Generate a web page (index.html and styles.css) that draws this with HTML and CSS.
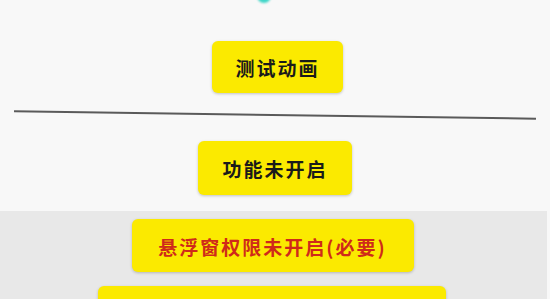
FILE: index.html
```html
<!DOCTYPE html>
<html lang="zh">
<head>
<meta charset="utf-8">
<link rel="stylesheet" href="styles.css">
</head>
<body>
<div class="page">
  <div class="top">
    <div class="dot"></div>
    <div class="btn btn-anim">测试动画</div>
    <div class="divider"></div>
    <div class="btn btn-func">功能未开启</div>
  </div>
  <div class="bottom">
    <div class="btn btn-perm">悬浮窗权限未开启(必要)</div>
    <div class="btn btn-next"></div>
  </div>
</div>
</body>
</html>
```

FILE: styles.css
```css
html, body {
  margin: 0;
  padding: 0;
  background: #f8f8f8;
  overflow: hidden;
}
.page {
  width: 550px;
  height: 299px;
  overflow: hidden;
  font-family: "Noto Sans CJK SC", "Noto Sans", sans-serif;
}
.top {
  display: flex;
  flex-direction: column;
  align-items: center;
  height: 211px;
  background: #f8f8f8;
}
.dot {
  width: 14px;
  height: 14px;
  border-radius: 50%;
  background: #3fd6c8;
  margin-top: -11px;
  margin-left: -22px;
  filter: blur(1px);
  flex-shrink: 0;
}
.btn {
  display: flex;
  align-items: center;
  justify-content: center;
  flex-shrink: 0;
  background: #fbea00;
  border-radius: 6px;
  box-shadow: 0 1px 3px rgba(0, 0, 0, 0.22);
  font-weight: 700;
  font-size: 19px;
  letter-spacing: 2px;
  color: #1a1a1a;
  box-sizing: border-box;
}
.btn-anim {
  width: 131px;
  height: 52px;
  margin-top: 38px;
  margin-left: 5px;
}
.divider {
  flex-shrink: 0;
  width: 522px;
  height: 2px;
  background: #5a5a5a;
  margin-top: 21px;
  transform: rotate(0.8deg);
}
.btn-func {
  width: 154px;
  height: 54px;
  margin-top: 25px;
}
.bottom {
  display: flex;
  flex-direction: column;
  align-items: center;
  gap: 14px;
  height: 88px;
  padding-top: 8px;
  width: 547px;
  background: #e8e8e8;
}
.btn-perm {
  width: 282px;
  height: 53px;
  color: #cf2a1a;
  margin-left: -2px;
  padding-top: 1px;
}
.btn-next {
  width: 348px;
  height: 40px;
  margin-left: -4px;
}
```
